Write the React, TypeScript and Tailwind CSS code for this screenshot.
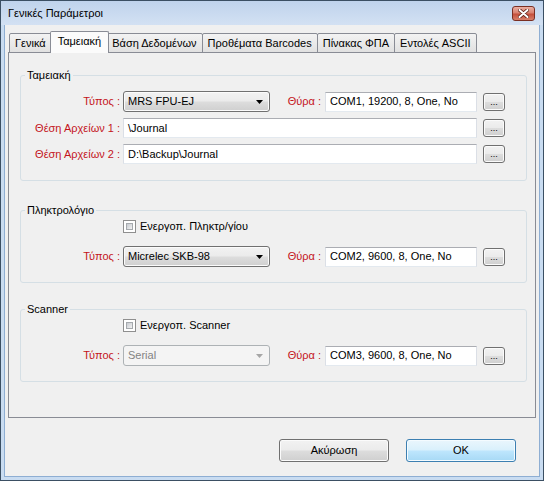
import React from "react";

const RED = "text-[#c4151c]";
const BTN_BG =
  "bg-[linear-gradient(#f2f2f2_0%,#ebebeb_48%,#dddddd_52%,#cfcfcf_100%)]";

const TABS = [
  "Γενικά",
  "Ταμειακή",
  "Βάση Δεδομένων",
  "Προθέματα Barcodes",
  "Πίνακας ΦΠΑ",
  "Εντολές ASCII",
];

function Field({ value, className = "" }: { value: string; className?: string }) {
  return (
    <div
      className={`h-[20px] flex items-center pl-[4px] bg-white border border-t-[#abadb3] border-l-[#dbdfe6] border-r-[#dbdfe6] border-b-[#e3e9ef] whitespace-nowrap overflow-hidden ${className}`}
    >
      {value}
    </div>
  );
}

function Combo({ value, disabled }: { value: string; disabled?: boolean }) {
  return (
    <div
      className={`ml-[3px] w-[147px] h-[21px] flex items-center justify-between pl-[4px] pr-[6px] rounded-[3px] border ${
        disabled
          ? "border-[#adb2b5] bg-[#f4f4f4] text-[#838383]"
          : `border-[#707070] ${BTN_BG} shadow-[inset_0_0_0_1px_#fbfbfb]`
      }`}
    >
      <span>{value}</span>
      <svg width="7" height="4" viewBox="0 0 7 4">
        <path d="M0 0h7L3.5 4z" fill={disabled ? "#a6a6a6" : "#000"} />
      </svg>
    </div>
  );
}

function Browse() {
  return (
    <div
      className={`ml-[6px] w-[22px] h-[18px] rounded-[3px] border border-[#707070] ${BTN_BG} shadow-[inset_0_0_0_1px_#fbfbfb] flex items-end justify-center pb-[3px] text-[9px] leading-none`}
    >
      ...
    </div>
  );
}

function Checkbox({ label }: { label: string }) {
  return (
    <div className="flex items-center h-[13px] pl-[102px]">
      <div className="w-[13px] h-[13px] border border-[#8f8f8f] bg-white p-[2px]">
        <div className="w-full h-full border border-[#a5a9ad] bg-[linear-gradient(135deg,#c5c9cf,#f3f3f3)]" />
      </div>
      <span className="ml-[4px]">{label}</span>
    </div>
  );
}

function TypeRow({
  type,
  port,
  disabled,
}: {
  type: string;
  port: string;
  disabled?: boolean;
}) {
  return (
    <div className="flex items-center h-[21px]">
      <span className={`w-[99px] text-right ${RED}`}>Τύπος :</span>
      <Combo value={type} disabled={disabled} />
      <span className={`w-[51px] text-right ${RED}`}>Θύρα :</span>
      <Field value={port} className="ml-[4px] w-[152px]" />
      <Browse />
    </div>
  );
}

function PathRow({ label, value }: { label: string; value: string }) {
  return (
    <div className="flex items-center h-[20px] mt-[6px]">
      <span className={`w-[99px] text-right ${RED}`}>{label}</span>
      <Field value={value} className="ml-[3px] w-[354px]" />
      <Browse />
    </div>
  );
}

function Group({
  title,
  className = "",
  children,
}: {
  title: string;
  className?: string;
  children: React.ReactNode;
}) {
  return (
    <fieldset
      className={`ml-[11px] mr-[8px] border border-[#d5dfe5] rounded-[3px] ${className}`}
    >
      <legend className="ml-[4px] px-[2px] leading-[13px]">{title}</legend>
      {children}
    </fieldset>
  );
}

function CloseButton() {
  return (
    <div className="w-[23px] h-[15px] rounded-[3px] border border-[#7a2f23] bg-[linear-gradient(#eab0a3_0%,#d98170_45%,#c44f3b_55%,#d8806b_100%)] flex items-center justify-center">
      <svg width="11" height="9" viewBox="0 0 11 9">
        <path d="M1.5 1l8 7M9.5 1l-8 7" stroke="#5b2016" strokeWidth="3.6" strokeLinecap="round" />
        <path d="M1.5 1l8 7M9.5 1l-8 7" stroke="#fff" strokeWidth="2" strokeLinecap="round" />
      </svg>
    </div>
  );
}

export default function App() {
  return (
    <div className="w-[544px] h-[481px] flex flex-col border border-[#3b4f63] bg-[#c9dcf1] font-['Liberation_Sans',Arial,sans-serif] text-[11px] leading-[13px] text-black select-none">
      {/* Title bar */}
      <div className="h-[24px] shrink-0 flex items-center justify-between pl-[7px] pr-[8px] bg-[linear-gradient(#bfd3ec,#d3e1f3)]">
        <span>Γενικές Παράμετροι</span>
        <CloseButton />
      </div>

      {/* Body */}
      <div className="flex-1 mx-[3px] mb-[3px] flex flex-col bg-[#f0f0f0] border border-t-0 border-[#8eaed3]">
        {/* Tabs */}
        <div className="mt-[6px] mx-[3px] flex flex-col">
          <div className="flex items-end h-[22px] pl-[1px] -mb-px relative z-10">
            {TABS.map((t, i) =>
              i === 1 ? (
                <div
                  key={t}
                  className="relative z-10 -mx-[2px] h-[22px] px-[7px] pb-[2px] flex items-center border border-b-0 border-[#898c95] rounded-t-[2px] bg-[#fbfbfb]"
                >
                  {t}
                </div>
              ) : (
                <div
                  key={t}
                  className={`h-[20px] px-[5px] flex items-center border border-[#898c95] rounded-t-[2px] bg-[linear-gradient(#f3f3f3,#e1e1e1)] ${
                    i > 0 ? "-ml-px" : ""
                  }`}
                >
                  {t}
                </div>
              )
            )}
          </div>

          <div className="h-[366px] border border-[#898c95] bg-[#f0f0f0] flex flex-col">
            <Group title="Ταμειακή" className="mt-[16px] pt-[9px] pb-[16px]">
              <TypeRow type="MRS FPU-EJ" port="COM1, 19200, 8, One, No" />
              <PathRow label="Θέση Αρχείων 1 :" value="\Journal" />
              <PathRow label="Θέση Αρχείων 2 :" value="D:\Backup\Journal" />
            </Group>

            <Group title="Πληκτρολόγιο" className="mt-[23px] pt-[3px] pb-[15px]">
              <Checkbox label="Ενεργοπ. Πληκτρ/γίου" />
              <div className="mt-[13px]">
                <TypeRow type="Micrelec SKB-98" port="COM2, 9600, 8, One, No" />
              </div>
            </Group>

            <Group title="Scanner" className="mt-[20px] pt-[3px] pb-[15px]">
              <Checkbox label="Ενεργοπ. Scanner" />
              <div className="mt-[13px]">
                <TypeRow type="Serial" port="COM3, 9600, 8, One, No" disabled />
              </div>
            </Group>
          </div>
        </div>

        {/* Dialog buttons */}
        <div className="flex justify-end gap-[17px] mt-[21px] mr-[23px]">
          <button
            className={`w-[110px] h-[23px] rounded-[3px] border border-[#707070] ${BTN_BG} shadow-[inset_0_0_0_1px_#fbfbfb]`}
          >
            Ακύρωση
          </button>
          <button className="w-[110px] h-[23px] rounded-[3px] border border-[#3c7fb1] bg-[linear-gradient(#eaf6fd_0%,#d9f0fc_48%,#bee6fd_52%,#a7d9f5_100%)] shadow-[inset_0_0_0_1px_#f4fbff]">
            OK
          </button>
        </div>
      </div>
    </div>
  );
}
